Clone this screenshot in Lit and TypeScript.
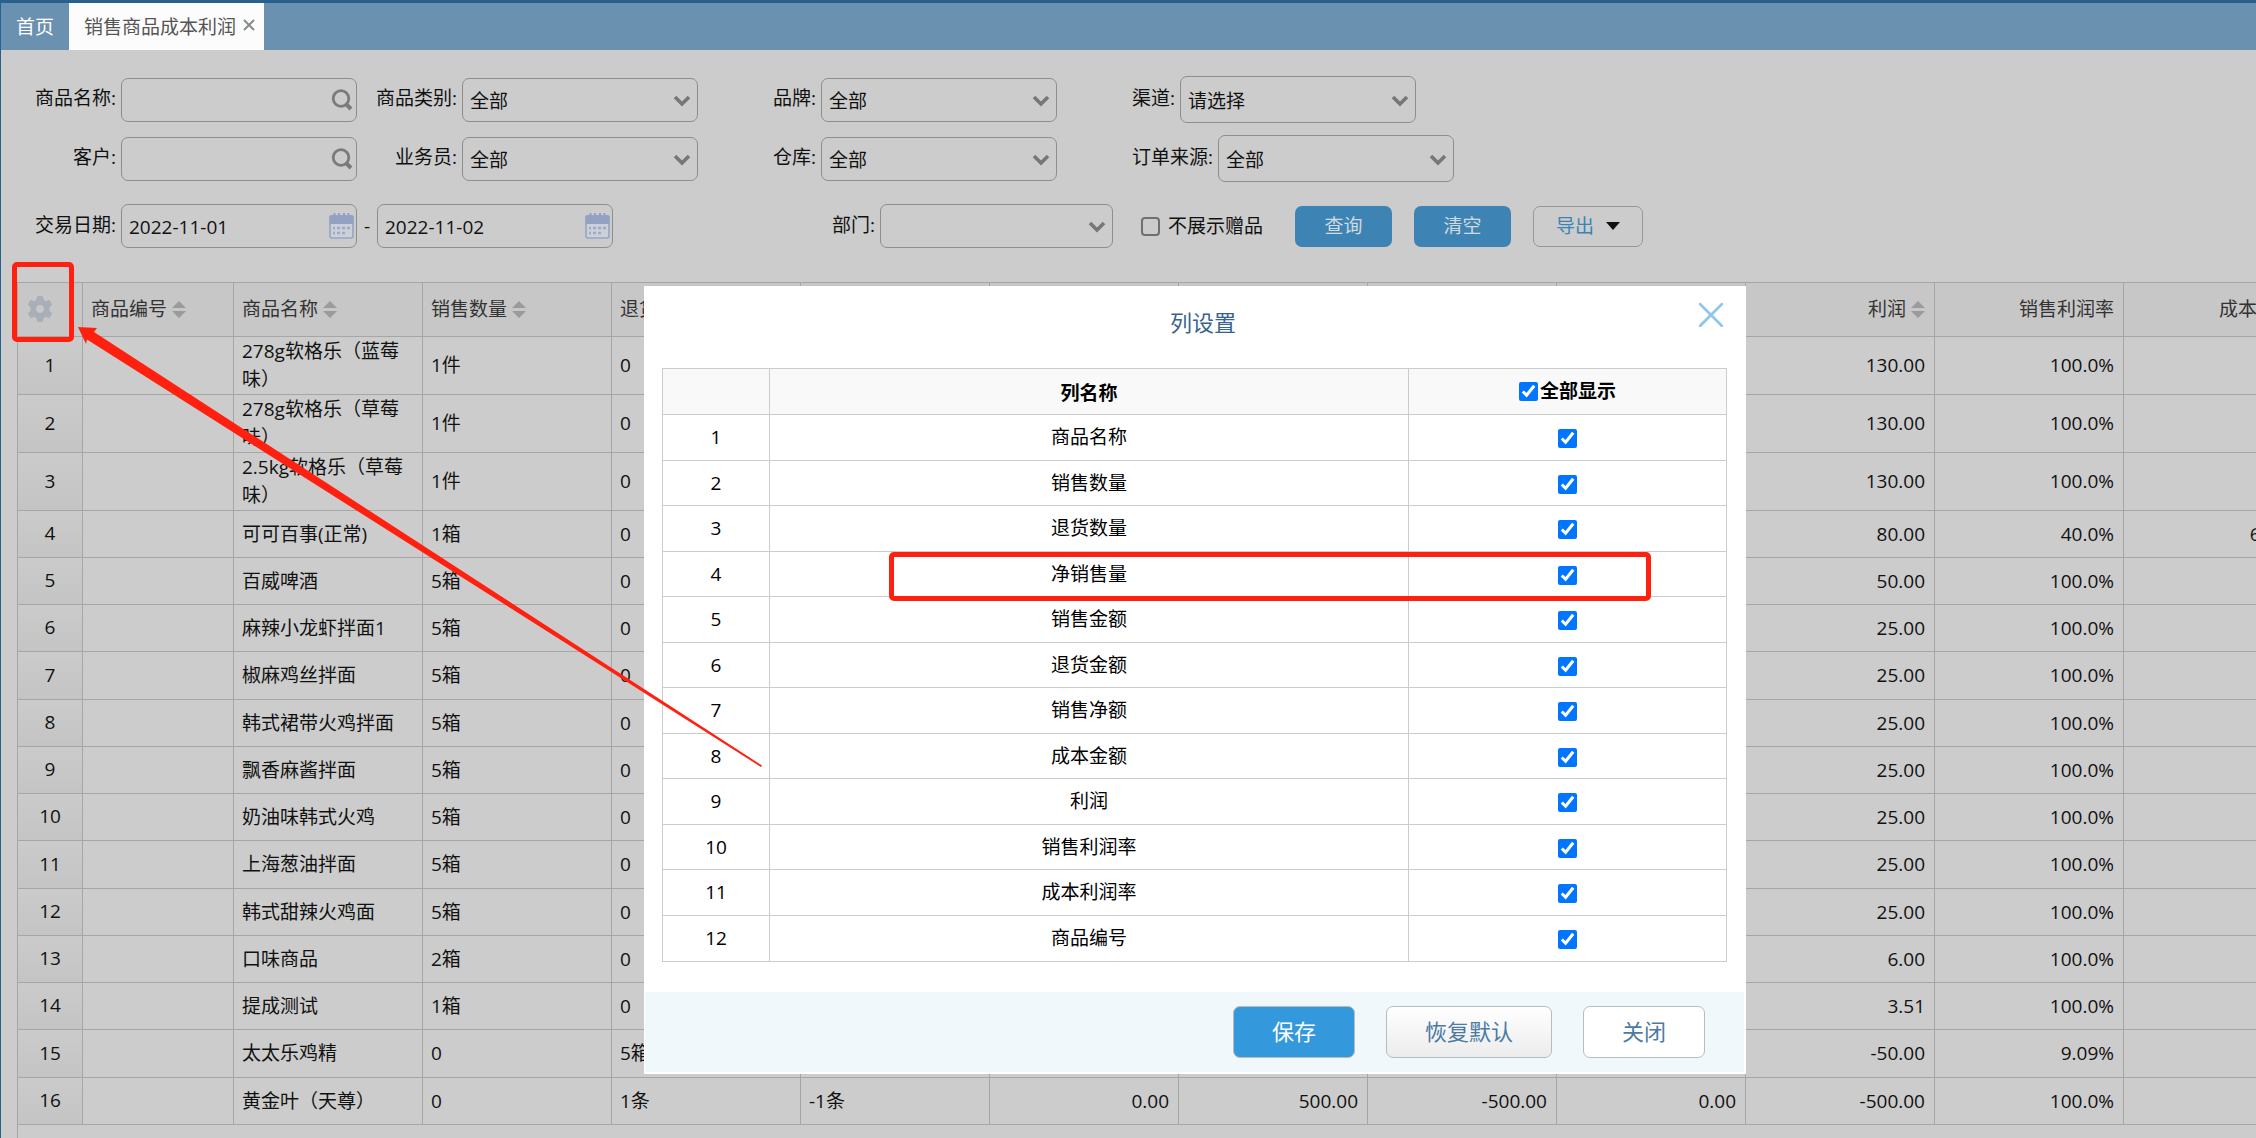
import { LitElement, html, css, svg, nothing } from "lit";
import { customElement, property, state } from "lit/decorators.js";

const ROWS: string[][] = [
  ["278g软格乐（蓝莓味）", "1件", "0", "", "", "", "", "", "130.00", "100.0%", ""],
  ["278g软格乐（草莓味）", "1件", "0", "", "", "", "", "", "130.00", "100.0%", ""],
  ["2.5kg软格乐（草莓味）", "1件", "0", "", "", "", "", "", "130.00", "100.0%", ""],
  ["可可百事(正常)", "1箱", "0", "", "", "", "", "", "80.00", "40.0%", "66.67%"],
  ["百威啤酒", "5箱", "0", "", "", "", "", "", "50.00", "100.0%", ""],
  ["麻辣小龙虾拌面1", "5箱", "0", "", "", "", "", "", "25.00", "100.0%", ""],
  ["椒麻鸡丝拌面", "5箱", "0", "", "", "", "", "", "25.00", "100.0%", ""],
  ["韩式裙带火鸡拌面", "5箱", "0", "", "", "", "", "", "25.00", "100.0%", ""],
  ["飘香麻酱拌面", "5箱", "0", "", "", "", "", "", "25.00", "100.0%", ""],
  ["奶油味韩式火鸡", "5箱", "0", "", "", "", "", "", "25.00", "100.0%", ""],
  ["上海葱油拌面", "5箱", "0", "", "", "", "", "", "25.00", "100.0%", ""],
  ["韩式甜辣火鸡面", "5箱", "0", "", "", "", "", "", "25.00", "100.0%", ""],
  ["口味商品", "2箱", "0", "", "", "", "", "", "6.00", "100.0%", ""],
  ["提成测试", "1箱", "0", "", "", "", "", "", "3.51", "100.0%", ""],
  ["太太乐鸡精", "0", "5箱", "", "", "", "", "", "-50.00", "9.09%", ""],
  ["黄金叶（天尊）", "0", "1条", "-1条", "0.00", "500.00", "-500.00", "0.00", "-500.00", "100.0%", ""],
];

const COLUMNS = [
  "商品名称", "销售数量", "退货数量", "净销售量", "销售金额", "退货金额",
  "销售净额", "成本金额", "利润", "销售利润率", "成本利润率", "商品编号",
];

const sortIcon = svg`<svg class="sort" viewBox="0 0 14 17" width="14" height="17" aria-hidden="true">
  <path d="M7 0 14 7H0zM0 10H14L7 17z" fill="#9b9b9b"/></svg>`;
const chevron = svg`<svg class="chevron" viewBox="0 0 18 12" width="18" height="12" aria-hidden="true">
  <path d="M2 2 9 9 16 2" fill="none" stroke="#777" stroke-width="3.600"/></svg>`;
const magnifier = svg`<svg viewBox="0 0 22 22" width="22" height="22" aria-hidden="true">
  <circle cx="10" cy="9.500" r="7.800" fill="none" stroke="#7b7b7b" stroke-width="2.800"/>
  <path d="M15.500 15.500 20 20" stroke="#7b7b7b" stroke-width="4"/></svg>`;
const calendar = svg`<svg viewBox="0 0 25 26" width="25" height="26" aria-hidden="true">
  <rect x="1" y="3" width="23" height="22" rx="2" fill="#ccd0d8" stroke="#98a6c4" stroke-width="1.600"/>
  <path d="M0.500 4q0-2 2-2h20q2 0 2 2v7h-24z" fill="#93a2c2"/>
  <path d="M5.500 0v4M10 0v4M15 0v4M19.500 0v4" stroke="#93a2c2" stroke-width="2"/>
  <path d="M8 15h3M13 15h3M18 15h3M4 15h2M4 20h2M8 20h3M13 20h3" stroke="#9dabc8" stroke-width="2.600"/></svg>`;
const gear = svg`<svg viewBox="0 0 26 26" width="26" height="26" aria-hidden="true">
  <path fill="#a9afb7" fill-rule="evenodd" stroke="#a9afb7" stroke-width="1" stroke-linejoin="round" d="M10.500 .5h5l.8 3.800 2.400 1.400 3.600-1.200 2.400 4.200-2.700 2.500v3.600l2.700 2.500-2.400 4.200-3.600-1.200-2.400 1.400-.8 3.800h-5l-.8-3.800-2.400-1.400-3.600 1.200-2.400-4.200 2.700-2.500v-3.600L1.300 8.700l2.400-4.200 3.600 1.200 2.400-1.400zM13 8.500a4.500 4.500 0 1 0 0 9 4.500 4.500 0 0 0 0-9z"/></svg>`;

@customElement("select-box")
class SelectBox extends LitElement {
  @property() label = "";
  @property() value = "";

  static styles = css`
    :host { display: flex; align-items: center; }
    .label { width: var(--label-width, 86px); text-align: right; white-space: nowrap; padding-bottom: 3px; }
    .box { position: relative; margin-left: 5px; width: var(--box-width, 236px); height: var(--box-height, 44px); }
    select {
      appearance: none; box-sizing: border-box; width: 100%; height: 100%;
      padding: 2px 30px 0 7px; border: 1px solid #8e8e8e; border-radius: 7px;
      background: transparent; color: #111; font: inherit;
    }
    .chevron { position: absolute; right: 7px; top: 50%; margin-top: -5px; pointer-events: none; }
  `;

  render() {
    return html`<label class="label" for="s">${this.label}:</label>
      <div class="box"><select id="s"><option>${this.value}</option></select>${chevron}</div>`;
  }
}

@customElement("text-box")
class TextBox extends LitElement {
  @property() label = "";
  @property() value = "";
  @property() icon = "search";
  @property({ type: Boolean }) bare = false;

  static styles = css`
    :host { display: flex; align-items: center; }
    .label { width: var(--label-width, 86px); margin-right: 5px; text-align: right; white-space: nowrap; padding-bottom: 3px; }
    .box { position: relative; width: 236px; height: 44px; }
    input {
      box-sizing: border-box; width: 100%; height: 100%; padding: 1px 34px 0 7px;
      border: 1px solid #8e8e8e; border-radius: 7px; background: transparent; color: #111; font: inherit;
    }
    button {
      position: absolute; right: 3px; top: 50%; transform: translateY(-50%);
      display: flex; width: 25px; justify-content: center; padding: 0; border: 0; background: none; cursor: pointer;
    }
  `;

  render() {
    return html`
      ${this.bare ? nothing : html`<label class="label" for="t">${this.label}:</label>`}
      <div class="box">
        <input id="t" type="text" .value=${this.value} aria-label=${this.label} />
        <button type="button" aria-label=${this.icon === "search" ? "搜索" : "选择日期"}>
          ${this.icon === "search" ? magnifier : calendar}
        </button>
      </div>`;
  }
}

@customElement("column-dialog")
class ColumnDialog extends LitElement {
  @state() private shown = COLUMNS.map(() => true);

  static styles = css`
    :host { display: block; background: #fff; color: #000; }
    header { position: relative; height: 82px; padding-left: 16px; }
    h2 { margin: 0; text-align: center; font-size: 22px; font-weight: 400; line-height: 72px; color: #36638f; }
    .close { position: absolute; right: 23px; top: 17px; display: flex; padding: 0; border: 0; background: none; cursor: pointer; }
    .body { padding: 0 19px 30px 18px; }
    table { width: 100%; table-layout: fixed; border-collapse: collapse; }
    .c-index { width: 107px; }
    .c-show { width: 318px; }
    th, td { height: 45px; box-sizing: border-box; padding: 0 0 1px; border: 1px solid #ccc; text-align: center; line-height: 26px; }
    thead th { height: 46px; padding: 2px 0 0; background: #f9f9f9; font-weight: 700; }
    tbody tr:nth-child(odd) td, tbody tr:last-child td { height: 46px; }
    input { width: 19px; height: 19px; margin: 0; vertical-align: middle; accent-color: #0075ff; }
    .all { display: inline-flex; align-items: center; gap: 2px; }
    footer { display: flex; justify-content: flex-end; gap: 31px; margin: 0 2px 2px 1px; padding: 14px 39px; background: #f0f8fc; }
    .btn {
      box-sizing: border-box; height: 52px; padding: 0 38px 2px; border: 1px solid #b9bcbf; border-radius: 7px;
      background: #fff; color: #4b7aa4; font: inherit; font-size: 22px; cursor: pointer;
    }
    .primary { background: #3398dc; color: #fff; }
    .soft { background: linear-gradient(#fff, #ececec); }
  `;

  private toggle(i: number) {
    this.shown = this.shown.map((v, n) => (n === i ? !v : v));
  }

  private toggleAll(e: Event) {
    const on = (e.target as HTMLInputElement).checked;
    this.shown = this.shown.map(() => on);
  }

  render() {
    return html`
      <header>
        <h2>列设置</h2>
        <button class="close" type="button" aria-label="关闭窗口">
          <svg viewBox="0 0 24 24" width="24" height="24"><path d="M0 0 24 24M24 0 0 24" stroke="#8fc6ea" stroke-width="2.800"/></svg>
        </button>
      </header>
      <div class="body">
        <table>
          <colgroup><col class="c-index" /><col /><col class="c-show" /></colgroup>
          <thead>
            <tr>
              <th></th>
              <th>列名称</th>
              <th><label class="all"><input type="checkbox" .checked=${this.shown.every(Boolean)} @change=${this.toggleAll} />全部显示</label></th>
            </tr>
          </thead>
          <tbody>
            ${COLUMNS.map((name, i) => html`<tr>
              <td>${i + 1}</td>
              <td>${name}</td>
              <td><input type="checkbox" aria-label=${name} .checked=${this.shown[i]} @change=${() => this.toggle(i)} /></td>
            </tr>`)}
          </tbody>
        </table>
      </div>
      <footer>
        <button class="btn primary" type="button">保存</button>
        <button class="btn soft" type="button">恢复默认</button>
        <button class="btn" type="button">关闭</button>
      </footer>`;
  }
}

@customElement("app-root")
class AppRoot extends LitElement {
  static styles = css`
    :host {
      display: block; position: relative; box-sizing: border-box; min-height: 100vh; overflow: hidden;
      border-top: 3px solid #27618f; border-left: 1px solid #27618f; background: #ccc; color: #111;
      font: 19px/28px "Open Sans", "Noto Sans CJK SC", sans-serif;
    }
    .tabs { display: flex; height: 47px; background: #6b91b0; }
    .tab { display: flex; align-items: center; padding: 0 15px; color: #fff; text-decoration: none; }
    .tab.active { padding: 0 9px 0 15px; gap: 7px; background: #fcfcfc; color: #555; }
    .tab-close { align-self: flex-start; display: flex; padding: 16px 0 0; border: 0; background: none; cursor: pointer; }
    .filters { padding: 26px 30px 34px; }
    .line { display: flex; align-items: center; height: 47px; margin-bottom: 12px; }
    .line.last { height: 44px; margin: 22px 0 0; }
    .first { --label-width: 85px; }
    .second { margin-left: 14px; }
    .third { margin-left: 32px; }
    .fourth { --label-width: auto; --box-height: 47px; margin-left: 75px; }
    .dept { --box-width: 233px; margin-left: 176px; }
    .dash { width: 20px; text-align: center; }
    .gift { display: flex; align-items: center; gap: 8px; margin-left: 28px; }
    .gift input {
      appearance: none; width: 19px; height: 19px; margin: 0; border: 2px solid #707070; border-radius: 4px; box-sizing: border-box;
    }
    .btn {
      box-sizing: border-box; width: 97px; height: 41px; margin-left: 22px; padding: 0; border: 0; border-radius: 7px;
      background: #3d84b5; color: #d3d9dd; font: inherit; cursor: pointer;
    }
    .query { margin-left: 32px; }
    .export {
      display: flex; align-items: center; justify-content: center; gap: 12px; width: 110px; padding: 0;
      border: 1px solid #979797; background: transparent; color: #3d84b5;
    }
    .grid { margin-left: 16px; border-left: 1px solid #a6a6a6; border-top: 1px solid #a6a6a6; min-height: 856px; overflow: hidden; }
    table { width: 2305px; table-layout: fixed; border-collapse: separate; border-spacing: 0; }
    .c-index { width: 65px; }
    .c-code { width: 151px; }
    .c-std { width: 189px; }
    .c-last { width: 200px; }
    th, td { box-sizing: border-box; padding: 0 9px 1px 8px; border-right: 1px solid #a6a6a6; border-bottom: 1px solid #a6a6a6; text-align: left; font-weight: 400; }
    thead th { height: 54px; background: #c7c7c7; color: #333; white-space: nowrap; }
    td, tbody th { height: 47px; }
    tbody tr:nth-child(4n + 3) td { height: 48px; }
    tbody tr:nth-child(-n + 3) td { height: 58px; }
    tbody th { padding: 0 0 2px; text-align: center; background: linear-gradient(#cbcbcb, #c4c4c4); }
    .num { text-align: right; }
    .head { display: inline-flex; align-items: center; gap: 5px; }
    .gear { display: flex; margin-left: 1px; padding: 0; border: 0; background: none; cursor: pointer; }
    column-dialog { position: absolute; left: 643px; top: 283px; width: 1102px; }
    .mark { position: absolute; box-sizing: border-box; border: 5px solid #ff2010; border-radius: 5px; pointer-events: none; }
    .mark-gear { left: 11px; top: 259px; width: 62px; height: 80px; }
    .mark-row { left: 888px; top: 549px; width: 762px; height: 49px; }
    .arrow { position: absolute; left: 76px; top: 323px; pointer-events: none; }
  `;

  private head(name: string, num: boolean, sortable = true) {
    return html`<th class=${num ? "num" : ""} scope="col"><span class="head">${name}${sortable && name ? sortIcon : nothing}</span></th>`;
  }

  render() {
    return html`
      <nav class="tabs">
        <a class="tab" href="#home">首页</a>
        <div class="tab active">
          <span>销售商品成本利润</span>
          <button class="tab-close" type="button" aria-label="关闭标签">
            <svg viewBox="0 0 12 12" width="12" height="12"><path d="M1 1 11 11M11 1 1 11" stroke="#8a8a8a" stroke-width="2"/></svg>
          </button>
        </div>
      </nav>
      <form class="filters" @submit=${(e: Event) => e.preventDefault()}>
        <div class="line">
          <text-box class="first" label="商品名称"></text-box>
          <select-box class="second" label="商品类别" value="全部"></select-box>
          <select-box class="third" label="品牌" value="全部"></select-box>
          <select-box class="fourth" label="渠道" value="请选择"></select-box>
        </div>
        <div class="line">
          <text-box class="first" label="客户"></text-box>
          <select-box class="second" label="业务员" value="全部"></select-box>
          <select-box class="third" label="仓库" value="全部"></select-box>
          <select-box class="fourth" label="订单来源" value="全部"></select-box>
        </div>
        <div class="line last">
          <text-box class="first" label="交易日期" value="2022-11-01" icon="date"></text-box>
          <span class="dash">-</span>
          <text-box bare label="结束日期" value="2022-11-02" icon="date"></text-box>
          <select-box class="dept" label="部门"></select-box>
          <label class="gift"><input type="checkbox" />不展示赠品</label>
          <button class="btn query" type="button">查询</button>
          <button class="btn" type="button">清空</button>
          <button class="btn export" type="button">导出
            <svg viewBox="0 0 14 8" width="14" height="8" aria-hidden="true"><path d="M0 0H14L7 8z" fill="#111"/></svg>
          </button>
        </div>
      </form>
      <div class="grid">
        <table>
          <colgroup>
            <col class="c-index" /><col class="c-code" />
            ${ROWS[0].map((_, i) => html`<col class=${i === 10 ? "c-last" : "c-std"} />`)}
          </colgroup>
          <thead>
            <tr>
              <th scope="col"><button class="gear" type="button" aria-label="列设置">${gear}</button></th>
              ${this.head("商品编号", false)}
              ${this.head("商品名称", false)}
              ${this.head("销售数量", false)}
              ${this.head("退货数量", false)}
              ${[0, 1, 2, 3, 4].map(() => this.head("", true))}
              ${this.head("利润", true)}
              ${this.head("销售利润率", true, false)}
              ${this.head("成本利润率", true, false)}
            </tr>
          </thead>
          <tbody>
            ${ROWS.map((cells, r) => html`<tr>
              <th scope="row">${r + 1}</th>
              <td></td>
              ${cells.map((c, i) => html`<td class=${i > 3 ? "num" : ""}>${c}</td>`)}
            </tr>`)}
          </tbody>
        </table>
      </div>
      <column-dialog role="dialog" aria-label="列设置"></column-dialog>
      <div class="mark mark-gear"></div>
      <div class="mark mark-row"></div>
      <svg class="arrow" viewBox="77 326 700 450" width="700" height="450" aria-hidden="true">
        <path d="M78 327 97 328 94 332 762 765.500 761 767 87 339.500 86 344z" fill="#ff2010"/>
      </svg>`;
  }
}
